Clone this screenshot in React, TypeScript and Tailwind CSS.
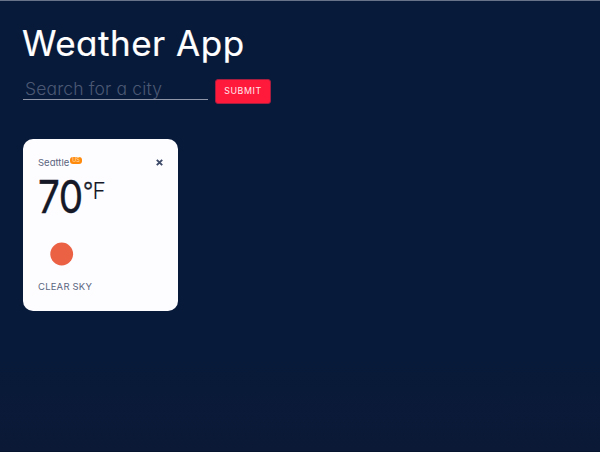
import React from "react";

function SearchForm() {
  return (
    <form className="mt-[7px] flex h-[29px] items-start" onSubmit={(e) => e.preventDefault()}>
      <input
        type="text"
        aria-label="City"
        placeholder="Search for a city"
        className="h-[25px] w-[185px] border-b border-[#8d95a6] bg-transparent pl-[2px] pt-[4px] text-[17.5px] font-light tracking-[0.15px] text-white outline-none placeholder:text-[#4b5874]"
      />
      <button
        type="submit"
        className="ml-[7px] mt-[4px] h-[25px] w-[56px] rounded-[3px] border border-[#a51d3f] bg-[#ff1a3c] text-[8.8px] leading-none tracking-[0.6px] text-[#ffe9ed]"
      >
        SUBMIT
      </button>
    </form>
  );
}

function CityCard() {
  return (
    <article className="mt-[35px] flex h-[172px] w-[155px] flex-col rounded-[10px] bg-[#fdfcff] px-[15px] pt-[15px] text-[#5b6680]">
      <header className="flex h-[16px] items-start justify-between">
        <h2 className="flex items-start text-[9.5px] leading-[17px]">
          <span className="w-[32px] whitespace-nowrap">Seattle</span>
          <sup className="top-0 mt-[3px] flex h-[7px] w-[12px] items-center justify-center rounded-[3px] bg-[#ff8a0c] text-[5.5px] leading-none text-[#ffe3c0]">
            US
          </sup>
        </h2>
        <svg className="mt-[5px] h-[7px] w-[7px]" viewBox="0 0 7 7" stroke="#3d4b69" strokeWidth="1.9">
          <path d="M.8.8 6.2 6.2M6.2.8.8 6.2" />
        </svg>
      </header>
      <div className="flex h-[54px] items-start whitespace-nowrap text-[#151927]">
        <span className="w-[45px] origin-left scale-x-[0.85] text-[45.5px] font-normal leading-[53px] tracking-[-0.5px] [-webkit-text-stroke:0.4px_#151927]">
          70
        </span>
        <span className="mt-[7px] text-[22.5px] font-light leading-[28px] tracking-[-0.4px]">
          <span className="tracking-[-0.8px] [-webkit-text-stroke:0.4px_#151927]">°</span>F
        </span>
      </div>
      <svg className="mt-[7px] h-[46px] w-[46px]" viewBox="0 0 46 46">
        <circle cx="23.7" cy="23" r="11.4" fill="#eb6144" />
      </svg>
      <p className="mt-[4px] whitespace-nowrap text-[9.5px] uppercase leading-[12px] tracking-[0.2px]">clear sky</p>
    </article>
  );
}

export default function App() {
  return (
    <div className="flex h-[452px] w-[600px] flex-col overflow-hidden border-b border-t border-b-[#07142d] border-t-[#68738a] bg-linear-to-b from-[#081a39] from-80% to-[#0b1936] pl-[23px] font-['Inter','Open_Sans',sans-serif] [font-feature-settings:'cv11','ss03']">
      <h1 className="-ml-px mt-[17px] h-[50px] whitespace-nowrap text-[35px] font-normal leading-[50px] tracking-[0.5px] text-white [-webkit-text-stroke:0.2px_white]">
        Weather App
      </h1>
      <SearchForm />
      <CityCard />
    </div>
  );
}
